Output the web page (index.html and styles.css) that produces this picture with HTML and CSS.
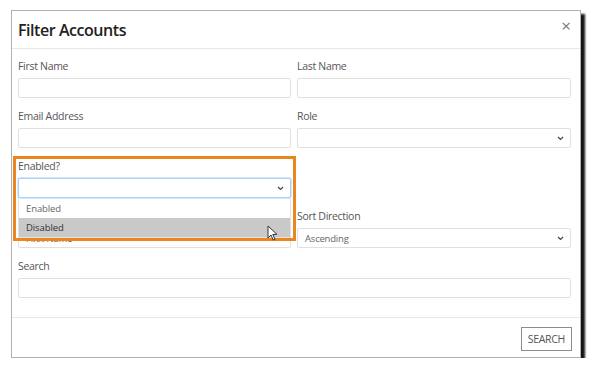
FILE: index.html
```html
<!DOCTYPE html>
<html lang="en">

<head>
    <meta charset="UTF-8">
    <meta name="viewport" content="width=device-width, initial-scale=1.0">
    <title>Filter Accounts</title>
    <link rel="stylesheet" href="styles.css">
</head>

<body>
    <div class="modal">
        <div class="modal-header">
            <h1 class="modal-title">Filter Accounts</h1>
            <span class="close">&times;</span>
        </div>

        <div class="modal-body">
            <div class="field">
                <label>First Name</label>
                <div class="input"></div>
            </div>
            <div class="field">
                <label>Last Name</label>
                <div class="input"></div>
            </div>

            <div class="field">
                <label>Email Address</label>
                <div class="input"></div>
            </div>
            <div class="field">
                <label>Role</label>
                <div class="input select">
                    <span></span>
                    <svg class="chevron" width="7" height="5" viewBox="0 0 7 5"><path d="M1 1l2.5 2.5L6 1" fill="none" stroke="#444" stroke-width="1.2"/></svg>
                </div>
            </div>

            <div class="field enabled-field">
                <label>Enabled?</label>
                <div class="input select focused">
                    <span></span>
                    <svg class="chevron" width="7" height="5" viewBox="0 0 7 5"><path d="M1 1l2.5 2.5L6 1" fill="none" stroke="#444" stroke-width="1.2"/></svg>
                </div>
                <ul class="options">
                    <li>Enabled</li>
                    <li class="hover">Disabled</li>
                </ul>
            </div>
            <div class="field spacer"></div>

            <div class="field">
                <label>Sort By</label>
                <div class="input select">
                    <span class="value">First Name</span>
                    <svg class="chevron" width="7" height="5" viewBox="0 0 7 5"><path d="M1 1l2.5 2.5L6 1" fill="none" stroke="#444" stroke-width="1.2"/></svg>
                </div>
            </div>
            <div class="field">
                <label>Sort Direction</label>
                <div class="input select">
                    <span class="value">Ascending</span>
                    <svg class="chevron" width="7" height="5" viewBox="0 0 7 5"><path d="M1 1l2.5 2.5L6 1" fill="none" stroke="#444" stroke-width="1.2"/></svg>
                </div>
            </div>

            <div class="field wide">
                <label>Search</label>
                <div class="input"></div>
            </div>
        </div>

        <div class="modal-footer">
            <button type="button">SEARCH</button>
        </div>
    </div>

    <!-- annotation drawn over the screenshot -->
    <div class="highlight"></div>
    <svg class="cursor" width="11" height="16" viewBox="0 0 11 16">
        <path d="M1 1v12l3-3 2.2 5 1.8-.8-2.2-4.8H10z" fill="#fff" stroke="#333" stroke-width="1"/>
    </svg>
</body>

</html>
```

FILE: styles.css
```css
body {
    margin: 0;
    background: #fff;
    font-family: "Open Sans", "Noto Sans", sans-serif;
    color: #555;
}

.modal {
    position: relative;
    margin: 10px 0 0 11px;
    width: 568px;
    height: 346px;
    border: 1px solid #b0b0b0;
    background: #fff;
    box-shadow: 4px 4px 2px rgba(0, 0, 0, 0.92);
    display: flex;
    flex-direction: column;
}

.modal-header {
    flex: none;
    height: 37px;
    border-bottom: 1px solid #e8e8e8;
    display: flex;
    align-items: center;
    justify-content: space-between;
    padding: 0 9px 0 6px;
}

.modal-title {
    margin: 0;
    font-size: 16px;
    font-weight: 600;
    letter-spacing: -0.45px;
    color: #222;
}

.close {
    font-size: 17px;
    color: #777;
    line-height: 1;
    margin-top: -9px;
}

.modal-body {
    flex: none;
    height: 259px;
    display: grid;
    grid-template-columns: 273px 274px;
    column-gap: 6px;
    padding: 9px 0 0 6px;
    align-content: start;
}

.field {
    position: relative;
    margin-bottom: 10px;
}

.field.wide {
    grid-column: 1 / 3;
}

.field label {
    display: block;
    font-size: 10.5px;
    letter-spacing: -0.3px;
    line-height: 16px;
    height: 16px;
    margin-bottom: 4px;
    color: #555;
}

.input {
    height: 18px;
    border: 1px solid #e0e0e0;
    border-radius: 2px;
    background: #fff;
}

.select {
    display: flex;
    align-items: center;
    justify-content: space-between;
    padding: 0 6px 0 7px;
}

.select .value {
    font-size: 9.5px;
    letter-spacing: -0.2px;
    color: #666;
}

.chevron {
    display: block;
}

.focused {
    border-color: #a9d0f5;
    box-shadow: 0 0 0 1px #d6e9fb;
}

.options {
    position: absolute;
    z-index: 2;
    top: 41px;
    left: 0;
    right: 0;
    margin: 0;
    padding: 0;
    list-style: none;
    background: #fff;
    border: 1px solid #e0e0e0;
    border-top: none;
}

.options li {
    height: 19px;
    line-height: 20px;
    padding-left: 7px;
    font-size: 9.5px;
    letter-spacing: -0.1px;
    color: #666;
}

.options li.hover {
    background: #c9c9c9;
    color: #333;
}

.modal-footer {
    flex: 1;
    border-top: 1px solid #e8e8e8;
    display: flex;
    align-items: flex-start;
    justify-content: flex-end;
    padding: 9px 8px 0;
}

button {
    font-family: inherit;
    font-size: 10.5px;
    letter-spacing: -0.3px;
    color: #555;
    background: #fff;
    border: 1px solid #8c8c8c;
    height: 24px;
    padding: 0 6px;
    cursor: pointer;
}

.highlight {
    position: absolute;
    left: 13px;
    top: 156px;
    width: 277px;
    height: 79px;
    border: 3px solid #e9861f;
    z-index: 3;
}

.cursor {
    position: absolute;
    left: 267px;
    top: 225px;
    z-index: 4;
}
```
